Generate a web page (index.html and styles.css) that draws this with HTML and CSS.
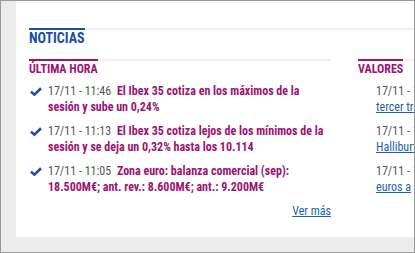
FILE: index.html
```html
<!DOCTYPE html>
<html lang="es">
<head>
    <meta charset="UTF-8">
    <meta name="viewport" content="width=device-width, initial-scale=1">
    <title>Noticias</title>
    <link rel="stylesheet" href="styles.css">
</head>
<body>
    <div class="frame">
        <div class="panel">
            <div class="section-head">
                <h2 class="blue-title">NOTICIAS</h2>
            </div>
            <div class="columns">
                <div class="col-main">
                    <div class="sub-head">
                        <h3 class="purple-title">ÚLTIMA HORA</h3>
                    </div>
                    <ul class="news-list">
                        <li>
                            <svg class="check" viewBox="0 0 12 9" width="12" height="9"><path d="M1 4.6 L4.4 7.6 L11 1.2" fill="none" stroke="#1b4f9c" stroke-width="2.6"/></svg>
                            <p><span class="time">17/11 - 11:46</span> <span class="headline">El Ibex 35 cotiza en los máximos de la sesión y sube un 0,24%</span></p>
                        </li>
                        <li>
                            <svg class="check" viewBox="0 0 12 9" width="12" height="9"><path d="M1 4.6 L4.4 7.6 L11 1.2" fill="none" stroke="#1b4f9c" stroke-width="2.6"/></svg>
                            <p><span class="time">17/11 - 11:13</span> <span class="headline">El Ibex 35 cotiza lejos de los mínimos de la sesión y se deja un 0,32% hasta los 10.114</span></p>
                        </li>
                        <li>
                            <svg class="check" viewBox="0 0 12 9" width="12" height="9"><path d="M1 4.6 L4.4 7.6 L11 1.2" fill="none" stroke="#1b4f9c" stroke-width="2.6"/></svg>
                            <p><span class="time">17/11 - 11:05</span> <span class="headline">Zona euro: balanza comercial (sep): 18.500M€; ant. rev.: 8.600M€; ant.: 9.200M€</span></p>
                        </li>
                    </ul>
                    <div class="more"><a href="#">Ver más</a></div>
                </div>
                <div class="col-side">
                    <div class="sub-head">
                        <h3 class="purple-title">VALORES</h3>
                    </div>
                    <ul class="side-list">
                        <li><span class="time">17/11 - 11:40</span><a href="#">tercer trimestre</a></li>
                        <li><span class="time">17/11 - 11:20</span><a href="#">Halliburton</a></li>
                        <li><span class="time">17/11 - 11:02</span><a href="#">euros a</a></li>
                    </ul>
                </div>
            </div>
        </div>
    </div>
</body>
</html>
```

FILE: styles.css
```css
*{
    margin: 0;
    padding: 0;
    box-sizing: border-box;
}
html, body{
    background: #fff;
    font-family: Roboto, "Liberation Sans", Arial, sans-serif;
    font-stretch: 87.5%;
}

.frame{
    width: 415px;
    height: 253px;
    border: 1px solid #9a9a9a;
    background: #ececec;
    overflow: hidden;
}
.panel{
    margin-left: 15px;
    width: 420px;
    height: 236px;
    background: #fff;
    padding: 27px 0 0 13px;
}

/* grey rule with a coloured piece over the title */
.section-head, .sub-head{
    display: flex;
    align-items: flex-start;
    border-top: 2px solid #efefef;
}
.blue-title{
    margin-top: -2px;
    border-top: 2px solid #1b4f9c;
    color: #1b4f9c;
    font-size: 14px;
    font-weight: bold;
    line-height: 16px;
}
.purple-title{
    margin-top: -2px;
    border-top: 2px solid #9b1470;
    color: #9b1470;
    font-size: 12px;
    font-weight: bold;
    line-height: 14px;
    padding-top: 1px;
}

.columns{
    display: flex;
    gap: 27px;
    margin-top: 13px;
}
.col-main{
    flex: none;
    width: 302px;
}
.col-side{
    flex: none;
    width: 120px;
}

.news-list{
    list-style: none;
    margin-top: 7px;
}
.news-list li{
    display: flex;
    align-items: flex-start;
    margin-bottom: 8px;
}
.check{
    flex: none;
    margin: 4px 6px 0 1px;
}
.news-list p{
    font-size: 12px;
    line-height: 16px;
}
.time{
    color: #555;
    margin-right: 3px;
}
.headline{
    color: #9b1470;
    font-weight: bold;
}

.more{
    text-align: right;
    font-size: 12px;
    line-height: 16px;
    margin-top: 4px;
}
.more a, .side-list a{
    color: #1b5fae;
}

.side-list{
    list-style: none;
    margin-top: 7px;
    font-size: 12px;
    line-height: 16px;
}
.side-list li{
    margin-bottom: 8px;
}
.side-list .time{
    display: block;
    margin-left: 18px;
}
.side-list a{
    display: block;
    margin-left: 18px;
    white-space: nowrap;
}
```
